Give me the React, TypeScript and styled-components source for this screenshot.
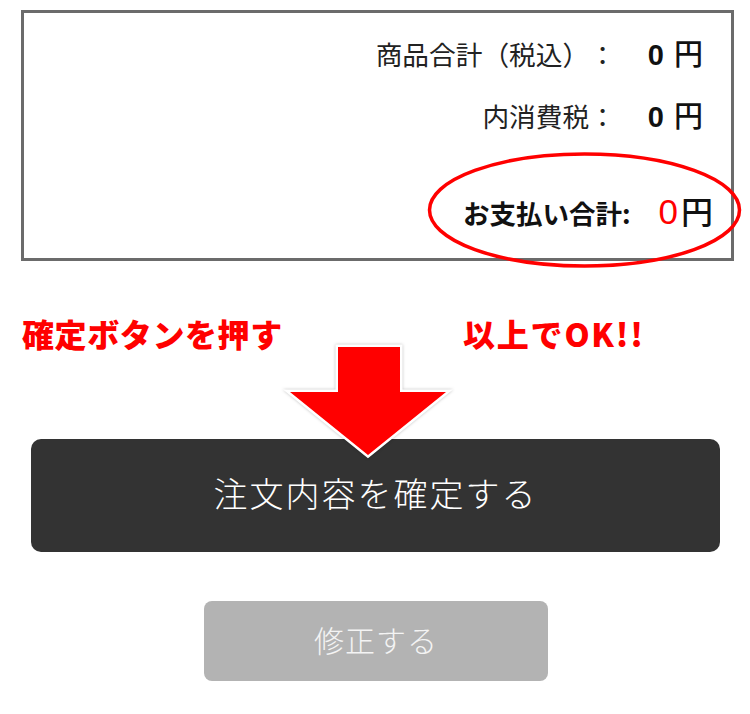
import React from "react";
import styled, { createGlobalStyle } from "styled-components";

const GlobalStyle = createGlobalStyle`
  html, body { margin: 0; padding: 0; background: #ffffff; }
  body { font-family: "Noto Sans CJK JP", "Noto Sans", sans-serif; color: #111; }
`;

const Page = styled.div`
  position: relative;
  width: 750px;
  height: 714px;
  padding-top: 10px;
  box-sizing: border-box;
  overflow: hidden;
`;

const SummaryBox = styled.section`
  box-sizing: border-box;
  width: 713px;
  height: 251px;
  margin-left: 21px;
  border: 3px solid #6b6b6b;
  display: flex;
  flex-direction: column;
  align-items: flex-end;
  padding-top: 21px;
`;

const Row = styled.div<{ $top: number; $right: number }>`
  display: flex;
  align-items: baseline;
  margin-top: ${(p) => p.$top}px;
  padding-right: ${(p) => p.$right}px;
  line-height: 36px;
  height: 36px;
`;

const Label = styled.span`
  font-size: 26.7px;
  font-weight: 400;
  color: #222;
  text-spacing-trim: space-all;
`;

const Value = styled.span`
  font-size: 29px;
  font-weight: 500;
  color: #111;
  margin-left: 32px;
`;

const Num = styled.span`
  font-family: "Liberation Sans", Arial, sans-serif;
  font-weight: 700;
  font-size: 29px;
  margin-right: 10px;
`;

const TotalLabel = styled.span`
  font-size: 26.5px;
  font-weight: 700;
  color: #111;
`;

const TotalValue = styled.span`
  font-size: 32px;
  font-weight: 500;
  margin-left: 28px;
  color: #111;
`;

const RedNum = styled.span`
  font-family: "Liberation Sans", Arial, sans-serif;
  color: #ff0000;
  font-size: 35px;
  margin-right: 3px;
`;

const Annotations = styled.div`
  display: grid;
  grid-template-columns: 441px auto;
  padding-left: 22px;
  margin-top: 52px;
  line-height: 40px;
`;

const Note = styled.span<{ $spacing: number }>`
  color: #ff0000;
  font-size: 32px;
  font-weight: 900;
  letter-spacing: ${(p) => p.$spacing}px;
`;

const ConfirmButton = styled.button`
  display: flex;
  align-items: center;
  justify-content: center;
  box-sizing: border-box;
  width: 689px;
  height: 113px;
  margin: 86px 0 0 31px;
  padding: 0 0 6px 0;
  border: none;
  border-radius: 10px;
  background: #333333;
  color: #ffffff;
  font-family: inherit;
  font-size: 34px;
  font-weight: 300;
  letter-spacing: 2px;
`;

const FixButton = styled.button`
  display: flex;
  align-items: center;
  justify-content: center;
  box-sizing: border-box;
  width: 344px;
  height: 80px;
  margin: 49px 0 0 204px;
  padding: 0 0 4px 0;
  border: none;
  border-radius: 8px;
  background: #b3b3b3;
  color: #f4f4f4;
  font-family: inherit;
  font-size: 30px;
  font-weight: 300;
  letter-spacing: 1px;
`;

const Overlay = styled.svg`
  position: absolute;
  left: 0;
  top: 0;
  pointer-events: none;
  overflow: visible;
`;

export default function App() {
  return (
    <>
      <GlobalStyle />
      <Page>
        <SummaryBox>
          <Row $top={0} $right={28}>
            <Label>商品合計（税込）：</Label>
            <Value>
              <Num>0</Num>円
            </Value>
          </Row>
          <Row $top={26} $right={28}>
            <Label>内消費税：</Label>
            <Value>
              <Num>0</Num>円
            </Value>
          </Row>
          <Row $top={60} $right={18}>
            <TotalLabel>お支払い合計:</TotalLabel>
            <TotalValue>
              <RedNum>0</RedNum>円
            </TotalValue>
          </Row>
        </SummaryBox>
        <Annotations>
          <Note $spacing={0.6}>確定ボタンを押す</Note>
          <Note $spacing={1.8}>以上でOK!!</Note>
        </Annotations>
        <ConfirmButton>注文内容を確定する</ConfirmButton>
        <FixButton>修正する</FixButton>

        <Overlay width="750" height="714" viewBox="0 0 750 714">
          <ellipse cx="584.5" cy="210" rx="155" ry="56" fill="none" stroke="#ff0000" strokeWidth="3.5" />
          <polygon
            points="338,347 400,347 400,392 446,392 368,455 290,392 338,392"
            fill="#ff0000"
            stroke="#ffffff"
            strokeWidth="5"
            strokeLinejoin="miter"
            paintOrder="stroke"
            style={{ filter: "drop-shadow(0 0 1.5px rgba(0,0,0,0.25))" }}
          />
        </Overlay>
      </Page>
    </>
  );
}
